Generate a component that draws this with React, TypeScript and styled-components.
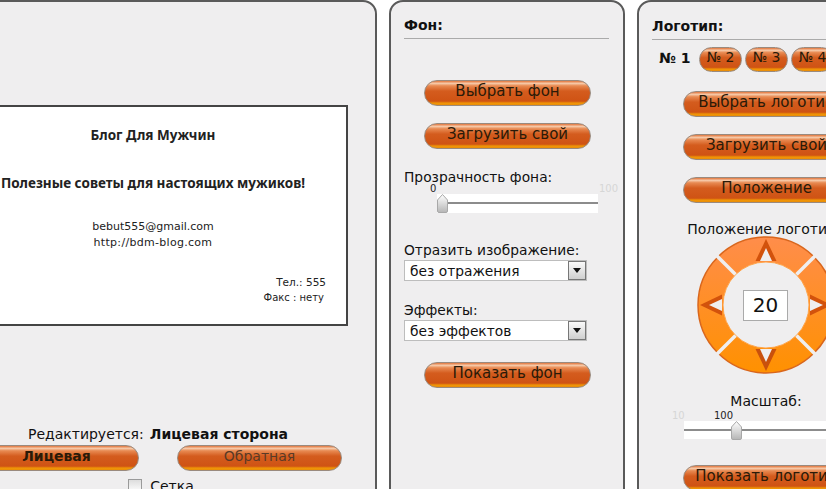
import styled, { createGlobalStyle } from "styled-components"

const Global = createGlobalStyle`
  html, body {
    margin: 0;
    padding: 0;
    background: #fff;
  }
  body {
    font-family: "DejaVu Sans", Verdana, sans-serif;
    color: #111;
  }
`

const Page = styled.div`
  width: 826px;
  height: 489px;
  overflow: hidden;
  display: flex;
  align-items: flex-start;
  gap: 12px;
`

const Panel = styled.section<{ $width: number; $shift?: number }>`
  flex: none;
  box-sizing: border-box;
  width: ${p => p.$width}px;
  height: 560px;
  margin-left: ${p => p.$shift ?? 0}px;
  padding: 0 13px;
  background: #efeeef;
  border: 2px solid #5a5a5a;
  border-radius: 14px;
  display: flex;
  flex-direction: column;
`

const FrontPanel = styled(Panel)`
  padding: 103px 28px 0 28px;
  align-items: center;
`

const Card = styled.div`
  box-sizing: border-box;
  flex: none;
  width: 390px;
  height: 221px;
  border: 2px solid #444;
  background: #fff;
  padding: 20px 20px 0;
  color: #222;
  display: flex;
  flex-direction: column;
  align-items: center;
`

const CardTitle = styled.div<{ $gap: number }>`
  font-family: "Noto Sans", "DejaVu Sans", sans-serif;
  font-size: 13.5px;
  font-weight: bold;
  line-height: 16px;
  white-space: nowrap;
  margin-bottom: ${p => p.$gap}px;
`

const CardLine = styled.div<{ $spacing?: number }>`
  font-size: 11px;
  line-height: 16px;
  letter-spacing: ${p => p.$spacing ?? 0}px;
`

const CardSmall = styled.div<{ $size: number; $inset?: number }>`
  font-size: ${p => p.$size}px;
  line-height: 16px;
  white-space: nowrap;
  margin-right: ${p => p.$inset ?? 0}px;
`

const CardSmallGroup = styled.div`
  align-self: flex-end;
  margin: 23px 0 0;
  display: flex;
  flex-direction: column;
  align-items: flex-end;
`

const EditRow = styled.div`
  margin: 100px 0 0 10px;
  font-size: 14px;
  line-height: 16px;
  white-space: nowrap;
  display: flex;
  gap: 6px;
`

const SideRow = styled.div`
  margin: 3px 0 0 10px;
  display: flex;
  gap: 38px;
`

const Pill = styled.button<{ $width?: number; $height?: number; $top?: number; $bold?: boolean; $muted?: boolean }>`
  flex: none;
  box-sizing: border-box;
  display: block;
  width: ${p => p.$width ?? 167}px;
  height: ${p => p.$height ?? 26}px;
  margin: ${p => p.$top ?? 0}px 0 0;
  padding: 0 0 5px;
  border: 1px solid #9a8a7e;
  border-radius: 13px;
  background: linear-gradient(
    to bottom,
    #e2743a 0,
    #f6c9a8 10%,
    #e88a52 20%,
    #d45c1e 42%,
    #cf5314 84%,
    #f09606 92%,
    #ea8c08 100%
  );
  font-family: "DejaVu Sans", Verdana, sans-serif;
  font-size: 15px;
  line-height: 18px;
  font-weight: ${p => (p.$bold ? "bold" : "normal")};
  color: ${p => (p.$muted ? "#5a3a26" : "#2a1a08")};
  white-space: nowrap;
  overflow: hidden;
  text-align: center;
`

const SideButton = styled(Pill)`
  font-size: 14px;
`

const Check = styled.div`
  margin: 7px 0 0 16px;
  display: flex;
  align-items: center;
  gap: 8px;
  font-size: 14px;
  line-height: 16px;
`

const CheckBox = styled.span`
  box-sizing: border-box;
  width: 14px;
  height: 14px;
  border: 1px solid #9a9a9a;
  background: linear-gradient(to bottom, #ddd, #fff);
`

const Heading = styled.h3<{ $top: number }>`
  margin: ${p => p.$top}px 0 0;
  padding-bottom: 5px;
  font-size: 14px;
  line-height: 16px;
  font-weight: bold;
  color: #111;
  border-bottom: 1px solid #aaa;
`

const FieldLabel = styled.div<{ $top: number; $center?: boolean }>`
  margin-top: ${p => p.$top}px;
  font-size: ${p => (p.$center ? 14 : 13.8)}px;
  line-height: 16px;
  white-space: nowrap;
  text-align: ${p => (p.$center ? "center" : "left")};
`

const CenteredButton = styled(Pill)`
  margin-left: 20px;
`

const BgColumn = styled.div`
  width: 205px;
  display: flex;
  flex-direction: column;
`

const LogoColumn = styled.div`
  width: 228px;
  display: flex;
  flex-direction: column;
`

const Slider = styled.div<{ $width: number; $left: number; $top: number; $height: number }>`
  position: relative;
  box-sizing: border-box;
  width: ${p => p.$width}px;
  height: ${p => p.$height}px;
  margin: ${p => p.$top}px 0 0 ${p => p.$left}px;
  background: #fff;
  flex: none;
  &::before {
    content: "";
    position: absolute;
    left: 0;
    right: 0;
    top: 8px;
    height: 2px;
    background: #8c8c8c;
  }
`

const SliderNumber = styled.span<{ $left: number; $faint?: boolean }>`
  position: absolute;
  left: ${p => p.$left}px;
  top: -11px;
  font-size: 10px;
  line-height: 12px;
  color: ${p => (p.$faint ? "#d6d6d6" : "#222")};
`

const Thumb = styled.svg<{ $left: number }>`
  position: absolute;
  left: ${p => p.$left}px;
  top: 0;
  display: block;
`

const SelectBox = styled.div<{ $top: number }>`
  box-sizing: border-box;
  width: 183px;
  height: 21px;
  margin-top: ${p => p.$top}px;
  flex: none;
  background: #fff;
  border: 1px solid #bdbdbd;
  padding-left: 5px;
  display: flex;
  align-items: center;
  justify-content: space-between;
  font-size: 13.8px;
`

const SelectArrow = styled.span`
  box-sizing: border-box;
  width: 18px;
  height: 19px;
  border: 1px solid #777;
  background: linear-gradient(to bottom, #fafafa, #cfcfcf);
  display: flex;
  align-items: center;
  justify-content: center;
  &::after {
    content: "";
    border-left: 4px solid transparent;
    border-right: 4px solid transparent;
    border-top: 5px solid #111;
  }
`

const Tabs = styled.div`
  margin-top: 7px;
  padding-left: 7px;
  display: flex;
  align-items: center;
  gap: 3px;
`

const ActiveTab = styled.b`
  width: 37px;
  font-size: 14px;
  line-height: 18px;
  margin-bottom: 4px;
  white-space: nowrap;
`

const TabPill = styled(Pill)`
  font-size: 14px;
  padding: 0 0 5px;
`

const LogoButton = styled(Pill)`
  margin-left: 31px;
`

const Wheel = styled.div`
  position: relative;
  flex: none;
  width: 138px;
  height: 138px;
  margin: -1px 0 0 45px;
`

const WheelInput = styled.div`
  position: absolute;
  left: 46px;
  top: 54px;
  box-sizing: border-box;
  width: 45px;
  height: 31px;
  background: #fff;
  border: 1px solid #aaa;
  font-size: 20px;
  line-height: 29px;
  text-align: center;
  color: #111;
`

const ThumbShape = () => (
  <>
    <defs>
      <linearGradient id="thumbFill" x1="0" y1="0" x2="0" y2="1">
        <stop offset="0" stopColor="#ffffff" />
        <stop offset="1" stopColor="#b5b5b5" />
      </linearGradient>
    </defs>
    <path d="M0.5 6 L5.5 0.5 L10.5 6 V17 Q10.5 18.5 9 18.5 H2 Q0.5 18.5 0.5 17 Z" fill="url(#thumbFill)" stroke="#a8a8a8" />
  </>
)

const PositionWheel = () => {
  const c = 69
  const slits = [45, 135, 225, 315]
  const rad = (d: number) => (d * Math.PI) / 180
  return (
    <svg width="138" height="138" viewBox="0 0 138 138">
      <defs>
        <linearGradient id="wheelFill" x1="0" y1="0" x2="0" y2="1">
          <stop offset="0" stopColor="#ff8d4b" />
          <stop offset="1" stopColor="#ff9100" />
        </linearGradient>
      </defs>
      <circle cx={c} cy={c} r={68} fill="url(#wheelFill)" stroke="#d9661c" strokeWidth="1.5" />
      {slits.map(a => (
        <line
          key={a}
          x1={c + Math.cos(rad(a)) * 42}
          y1={c + Math.sin(rad(a)) * 42}
          x2={c + Math.cos(rad(a)) * 70}
          y2={c + Math.sin(rad(a)) * 70}
          stroke="#efeeef"
          strokeWidth="3.5"
        />
      ))}
      <circle cx={c} cy={c} r={43} fill="#efeeef" stroke="#ffa64d" strokeWidth="1" />
      <path d="M69 3 L79.5 25 H58.5 Z" fill="#d2520c" />
      <path d="M69 12 L75 25 H63 Z" fill="#efeeef" />
      <path d="M69 135 L79.5 113 H58.5 Z" fill="#c9500c" />
      <path d="M69 126 L75 113 H63 Z" fill="#efeeef" />
      <path d="M3 69 L25 58.5 V79.5 Z" fill="#d2520c" />
      <path d="M12 69 L25 63 V75 Z" fill="#efeeef" />
      <path d="M135 69 L113 58.5 V79.5 Z" fill="#d2520c" />
      <path d="M126 69 L113 63 V75 Z" fill="#efeeef" />
    </svg>
  )
}

const App = () => {
  return (
    <Page>
      <Global />
      <FrontPanel $width={448} $shift={-71}>
        <Card>
          <CardTitle $gap={32}>Блог Для Мужчин</CardTitle>
          <CardTitle $gap={28}>Полезные советы для настоящих мужиков!</CardTitle>
          <CardLine>bebut555@gmail.com</CardLine>
          <CardLine $spacing={0.3}>http://bdm-blog.com</CardLine>
          <CardSmallGroup>
            <CardSmall $size={10.5}>Тел.: 555</CardSmall>
            <CardSmall $size={10} $inset={2}>Факс : нету</CardSmall>
          </CardSmallGroup>
        </Card>
        <EditRow>
          <span>Редактируется:</span>
          <b>Лицевая сторона</b>
        </EditRow>
        <SideRow>
          <SideButton $width={165} $bold>Лицевая</SideButton>
          <SideButton $width={165} $muted>Обратная</SideButton>
        </SideRow>
        <Check>
          <CheckBox />
          <span>Сетка</span>
        </Check>
      </FrontPanel>

      <Panel $width={236}>
        <BgColumn>
          <Heading $top={15}>Фон:</Heading>
          <CenteredButton $top={41}>Выбрать фон</CenteredButton>
          <CenteredButton $top={17}>Загрузить свой</CenteredButton>
          <FieldLabel $top={20}>Прозрачность фона:</FieldLabel>
          <Slider $width={161} $height={19} $left={33} $top={9}>
            <SliderNumber $left={-7}>0</SliderNumber>
            <SliderNumber $left={162} $faint>100</SliderNumber>
            <Thumb $left={0} width="11" height="19" viewBox="0 0 11 19"><ThumbShape /></Thumb>
          </Slider>
          <FieldLabel $top={29}>Отразить изображение:</FieldLabel>
          <SelectBox $top={2}>
            <span>без отражения</span>
            <SelectArrow />
          </SelectBox>
          <FieldLabel $top={21}>Эффекты:</FieldLabel>
          <SelectBox $top={2}>
            <span>без эффектов</span>
            <SelectArrow />
          </SelectBox>
          <CenteredButton $top={21}>Показать фон</CenteredButton>
        </BgColumn>
      </Panel>

      <Panel $width={258}>
        <LogoColumn>
          <Heading $top={16}>Логотип:</Heading>
          <Tabs>
            <ActiveTab>№ 1</ActiveTab>
            <TabPill $width={43} $height={25}>№ 2</TabPill>
            <TabPill $width={43} $height={25}>№ 3</TabPill>
            <TabPill $width={43} $height={25}>№ 4</TabPill>
          </Tabs>
          <LogoButton $top={19}>Выбрать логотип</LogoButton>
          <LogoButton $top={17}>Загрузить свой</LogoButton>
          <LogoButton $top={17}>Положение</LogoButton>
          <FieldLabel $top={18} $center>Положение логотипа</FieldLabel>
          <Wheel>
            <PositionWheel />
            <WheelInput>20</WheelInput>
          </Wheel>
          <FieldLabel $top={19} $center>Масштаб:</FieldLabel>
          <Slider $width={200} $height={18} $left={32} $top={12}>
            <SliderNumber $left={-12} $faint>10</SliderNumber>
            <SliderNumber $left={30}>100</SliderNumber>
            <Thumb $left={47} width="11" height="19" viewBox="0 0 11 19"><ThumbShape /></Thumb>
          </Slider>
          <LogoButton $top={26}>Показать логотип</LogoButton>
        </LogoColumn>
      </Panel>
    </Page>
  )
}

export default App
